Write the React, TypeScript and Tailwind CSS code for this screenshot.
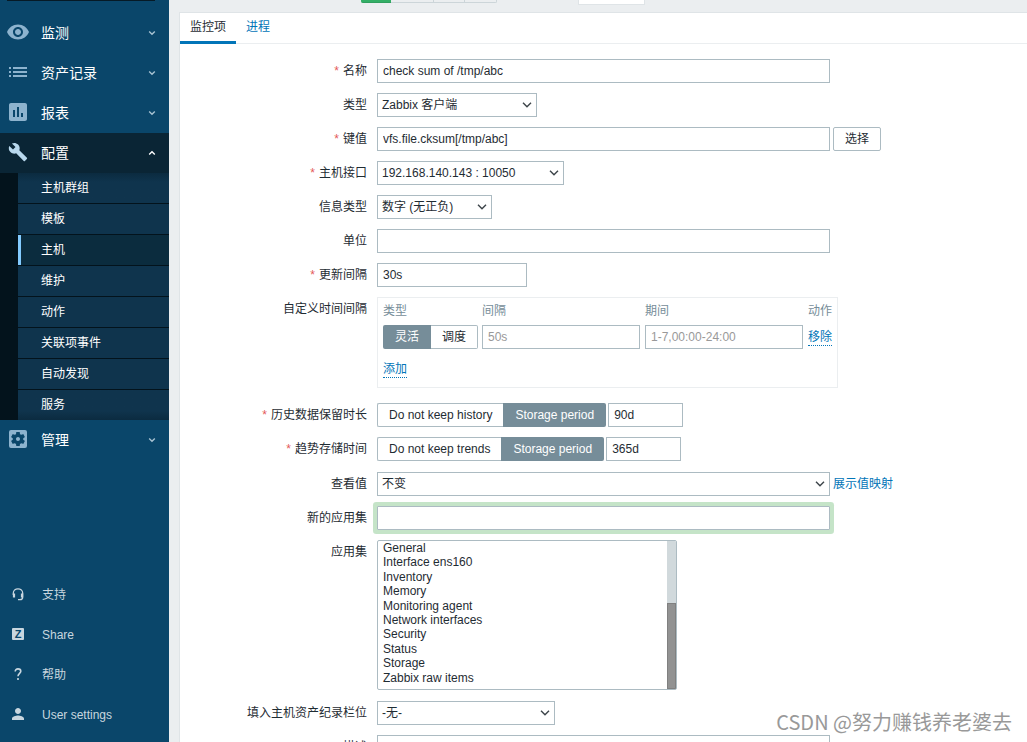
import type { ReactNode } from "react";
import { clsx } from "clsx";
import { MdBuild, MdPerson, MdPoll, MdSettingsApplications, MdVisibility } from "react-icons/md";

const INPUT = "h-6 border border-[#acbbc2] bg-white px-[5px] text-[#1f2c33] outline-none placeholder:text-[#999]";

const CONFIG_ITEMS = ["主机群组", "模板", "主机", "维护", "动作", "关联项事件", "自动发现", "服务"];

const APPLICATIONS = [
  "General",
  "Interface ens160",
  "Inventory",
  "Memory",
  "Monitoring agent",
  "Network interfaces",
  "Security",
  "Status",
  "Storage",
  "Zabbix raw items",
];

function ListIcon() {
  return (
    <svg viewBox="0 0 18 10" className="h-[10px] w-[18px]" fill="currentColor" shapeRendering="crispEdges">
      <path d="M0 0h2v2H0zM4 0h14v2H4zM0 4h2v2H0zM4 4h14v2H4zM0 8h2v2H0zM4 8h14v2H4z" />
    </svg>
  );
}

function HeadsetIcon() {
  return (
    <svg viewBox="0 0 12 13" className="h-[13px] w-3" fill="none" stroke="currentColor">
      <path d="M1.3 7V5.2a4.7 4.4 0 0 1 9.4 0V9c0 1.600-1 2.700-2.700 2.700H6" strokeWidth="1.300" />
      <path d="M2 5.500v4M10 5.500v4" strokeWidth="2.200" />
    </svg>
  );
}

function HelpIcon() {
  return (
    <svg viewBox="0 0 8 12" className="h-3 w-2" fill="none" stroke="currentColor" strokeWidth="1.600">
      <path d="M1.200 3.600C1.200 1.800 2.400.9 4 .9s2.800.9 2.800 2.400C6.800 5.300 4 5.400 4 8.300" />
      <path d="M4 10v2" />
    </svg>
  );
}

function Chevron({ up }: { up?: boolean }) {
  return (
    <svg viewBox="0 0 8 6" className={clsx("h-[6px] w-2", up && "rotate-180")} fill="none" stroke="currentColor" strokeWidth="1.400">
      <path d="M1.200 1.500 4 4.200l2.800-2.700" />
    </svg>
  );
}

interface MenuItemProps {
  icon: ReactNode;
  label: string;
  open?: boolean;
}

function MenuItem({ icon, label, open }: MenuItemProps) {
  return (
    <button
      type="button"
      aria-expanded={!!open}
      className={clsx(
        "flex h-10 w-full items-center pr-[13px] text-left text-sm text-white",
        open && "bg-[#0a2535]"
      )}
    >
      <span className={clsx("flex w-9 justify-center pb-[2px]", open ? "text-[#b8d8ed]" : "text-[#8db3ce]")}>
        {icon}
      </span>
      <span className="ml-[5px] flex-1">{label}</span>
      <span className={open ? "text-white" : "text-[#a9c3d3]"}>
        <Chevron up={open} />
      </span>
    </button>
  );
}

function FooterItem({ icon, label }: { icon: ReactNode; label: string }) {
  return (
    <a href="#" className="flex h-10 items-center text-[#c8d6df]">
      <span className="flex w-9 justify-center">{icon}</span>
      <span className="ml-[6px] pt-[2px]">{label}</span>
    </a>
  );
}

function Sidebar() {
  return (
    <aside className="flex w-[169px] shrink-0 flex-col bg-[#0a466a]">
      <div className="mx-[7px] mr-[14px] h-px bg-[#061a26]" />
      <nav className="mt-3">
        <MenuItem icon={<MdVisibility size={24} />} label="监测" />
        <MenuItem icon={<ListIcon />} label="资产记录" />
        <MenuItem icon={<MdPoll size={24} />} label="报表" />
        <MenuItem icon={<MdBuild size={20} />} label="配置" open />
        <ul className="bg-[#03131c] pl-[18px]">
          {CONFIG_ITEMS.map((item) => (
            <li key={item} className="group border-b border-[#03131c] last:border-b-0">
              <a
                href="#"
                className={clsx(
                  "flex h-[30px] items-center border-l-[3px] pl-5 text-white",
                  "group-first:bg-linear-to-b group-first:from-[#0b2b40] group-first:to-[#0f344d] group-first:to-30%",
                  "group-last:bg-linear-to-t group-last:from-[#0b2b40] group-last:to-[#0f344d] group-last:to-30%",
                  item === "主机" ? "border-[#83cbff] bg-[#0b2c3e]" : "border-transparent bg-[#0f344d]"
                )}
              >
                {item}
              </a>
            </li>
          ))}
        </ul>
        <MenuItem icon={<MdSettingsApplications size={24} />} label="管理" />
      </nav>
      <div className="mt-auto pb-2">
        <FooterItem icon={<HeadsetIcon />} label="支持" />
        <FooterItem
          icon={
            <span className="flex size-3 items-center justify-center rounded-[1px] bg-[#c8d6df] text-[11px] leading-3 font-bold text-[#0a466a]">
              Z
            </span>
          }
          label="Share"
        />
        <FooterItem icon={<HelpIcon />} label="帮助" />
        <FooterItem icon={<MdPerson size={18} />} label="User settings" />
      </div>
    </aside>
  );
}

interface RowProps {
  label: string;
  htmlFor?: string;
  required?: boolean;
  className?: string;
  children: ReactNode;
}

function Row({ label, htmlFor, required, className, children }: RowProps) {
  return (
    <div className={clsx("grid grid-cols-[187px_1fr] gap-x-[10px]", className)}>
      <label htmlFor={htmlFor} className="h-6 text-right leading-6">
        {required && <span className="mr-1 text-[#e45959]">*</span>}
        {label}
      </label>
      <div className="flex items-center">{children}</div>
    </div>
  );
}

function Select({ id, value, className }: { id: string; value: string; className: string }) {
  return (
    <div className={clsx("relative", className)}>
      <select
        id={id}
        className="block h-6 w-full appearance-none border border-[#acbbc2] bg-white px-1 text-[#1f2c33] outline-none"
      >
        <option>{value}</option>
      </select>
      <svg
        viewBox="0 0 10 6"
        className="pointer-events-none absolute top-[9px] right-[5px] h-[6px] w-[10px]"
        fill="none"
        stroke="#3c4449"
        strokeWidth="1.400"
      >
        <path d="M1 .8 5 4.800 9 .8" />
      </svg>
    </div>
  );
}

function Segmented({ name, options, value }: { name: string; options: string[]; value: string }) {
  return (
    <div role="radiogroup" aria-label={name} className="flex">
      {options.map((option) => (
        <label
          key={option}
          className={clsx(
            "flex h-6 items-center first:rounded-l-[2px] last:rounded-r-[2px]",
            option === value
              ? "bg-[#768d99] px-3 text-white"
              : "border-y border-[#acbbc2] bg-white px-[11px] first:border-l last:border-r"
          )}
        >
          <input type="radio" name={name} defaultChecked={option === value} className="sr-only" />
          {option}
        </label>
      ))}
    </div>
  );
}

function IntervalTable() {
  return (
    <div className="border border-[#ebeef0] px-[5px]">
      <table className="text-left">
        <thead>
          <tr className="h-[25px] text-[#768d99]">
            <th className="w-[99px] font-normal">类型</th>
            <th className="w-[163px] font-normal">间隔</th>
            <th className="w-[163px] font-normal">期间</th>
            <th className="w-6 font-normal">动作</th>
          </tr>
        </thead>
        <tbody>
          <tr className="h-7">
            <td>
              <Segmented name="interval_type" options={["灵活", "调度"]} value="灵活" />
            </td>
            <td>
              <input aria-label="间隔" placeholder="50s" className={clsx(INPUT, "block w-[158px]")} />
            </td>
            <td>
              <input aria-label="期间" placeholder="1-7,00:00-24:00" className={clsx(INPUT, "block w-[158px]")} />
            </td>
            <td>
              <button type="button" className="border-b border-dotted border-[#0275b8] leading-4 text-[#0275b8]">
                移除
              </button>
            </td>
          </tr>
          <tr className="h-9">
            <td colSpan={4}>
              <button type="button" className="border-b border-dotted border-[#0275b8] leading-4 text-[#0275b8]">
                添加
              </button>
            </td>
          </tr>
        </tbody>
      </table>
    </div>
  );
}

function ItemForm() {
  return (
    <form className="flex flex-col gap-[10px] pt-[15px]">
      <Row label="名称" htmlFor="name" required>
        <input id="name" defaultValue="check sum of /tmp/abc" className={clsx(INPUT, "w-[453px]")} />
      </Row>
      <Row label="类型" htmlFor="type">
        <Select id="type" value="Zabbix 客户端" className="w-40" />
      </Row>
      <Row label="键值" htmlFor="key" required>
        <input id="key" defaultValue="vfs.file.cksum[/tmp/abc]" className={clsx(INPUT, "w-[453px]")} />
        <button type="button" className="ml-[3px] h-6 w-12 rounded-[2px] border border-[#acbbc2]">
          选择
        </button>
      </Row>
      <Row label="主机接口" htmlFor="interface" required>
        <Select id="interface" value="192.168.140.143 : 10050" className="w-[187px]" />
      </Row>
      <Row label="信息类型" htmlFor="value_type">
        <Select id="value_type" value="数字 (无正负)" className="w-[115px]" />
      </Row>
      <Row label="单位" htmlFor="units">
        <input id="units" className={clsx(INPUT, "w-[453px]")} />
      </Row>
      <Row label="更新间隔" htmlFor="delay" required>
        <input id="delay" defaultValue="30s" className={clsx(INPUT, "w-[150px]")} />
      </Row>
      <Row label="自定义时间间隔" className="mb-[5px]">
        <IntervalTable />
      </Row>
      <Row label="历史数据保留时长" htmlFor="history" required>
        <Segmented name="history_mode" options={["Do not keep history", "Storage period"]} value="Storage period" />
        <input id="history" defaultValue="90d" className={clsx(INPUT, "ml-[2px] w-[75px]")} />
      </Row>
      <Row label="趋势存储时间" htmlFor="trends" required className="mb-px">
        <Segmented name="trends_mode" options={["Do not keep trends", "Storage period"]} value="Storage period" />
        <input id="trends" defaultValue="365d" className={clsx(INPUT, "ml-[2px] w-[75px]")} />
      </Row>
      <Row label="查看值" htmlFor="valuemap">
        <Select id="valuemap" value="不变" className="w-[453px]" />
        <a href="#" className="ml-[3px] text-[#0275b8]">
          展示值映射
        </a>
      </Row>
      <Row label="新的应用集" htmlFor="new_application">
        <input id="new_application" className={clsx(INPUT, "w-[453px] rounded-[1px] ring-4 ring-[#c5e4c8]")} />
      </Row>
      <Row label="应用集" htmlFor="applications" className="mb-px">
        <div className="flex h-[150px] w-[300px] overflow-hidden rounded-[2px] border border-[#acbbc2]">
          <select id="applications" multiple size={10} className="h-full flex-1 overflow-hidden px-[5px] outline-none">
            {APPLICATIONS.map((app) => (
              <option key={app} className="px-0">
                {app}
              </option>
            ))}
          </select>
          <div className="flex w-[9px] flex-col justify-end bg-[#d1d9dc]">
            <div className="h-[86px] border border-[#808080] bg-[#929292]" />
          </div>
        </div>
      </Row>
      <Row label="填入主机资产纪录栏位" htmlFor="inventory">
        <Select id="inventory" value="-无-" className="w-[178px]" />
      </Row>
      <Row label="描述" htmlFor="description">
        <textarea id="description" className="h-24 w-[453px] resize-none border border-[#acbbc2]" />
      </Row>
    </form>
  );
}

export default function App() {
  return (
    <div className="relative flex h-screen overflow-hidden bg-[#ebeef0] font-['Liberation_Sans','Noto_Sans_CJK_SC',sans-serif] text-xs text-[#1f2c33]">
      <Sidebar />
      <main className="flex min-w-0 flex-1 flex-col pl-[10px]">
        <div className="flex h-3 items-start pl-[182px]">
          <div className="h-[3px] w-[30px] rounded-bl-[2px] border-b border-[#2f9f5e] bg-[#34af67]" />
          <div className="flex h-[3px] divide-x divide-[#ccd5d9] rounded-br-[2px] border-r border-b border-[#ccd5d9]">
            <span className="w-[43px]" />
            <span className="w-[31px]" />
            <span className="w-[31px]" />
          </div>
          <div className="ml-[81px] h-[5px] w-[67px] border-x border-b border-[#dfe4e7] bg-white" />
        </div>
        <section className="min-h-0 flex-1 border-t border-l border-[#dfe4e7] bg-white">
          <div role="tablist" className="flex h-[31px] border-b border-[#ebeef0]">
            <button
              type="button"
              role="tab"
              aria-selected="true"
              className="h-[31px] border-b-[3px] border-[#0275b8] px-[10px]"
            >
              监控项
            </button>
            <button type="button" role="tab" aria-selected="false" className="h-7 px-[10px] text-[#0275b8]">
              进程
            </button>
          </div>
          <ItemForm />
        </section>
      </main>
      <div className="pointer-events-none absolute right-[15px] bottom-[6px] font-['Noto_Sans_CJK_SC',sans-serif] text-xl leading-7 text-[#999]">
        CSDN @努力赚钱养老婆去
      </div>
    </div>
  );
}
